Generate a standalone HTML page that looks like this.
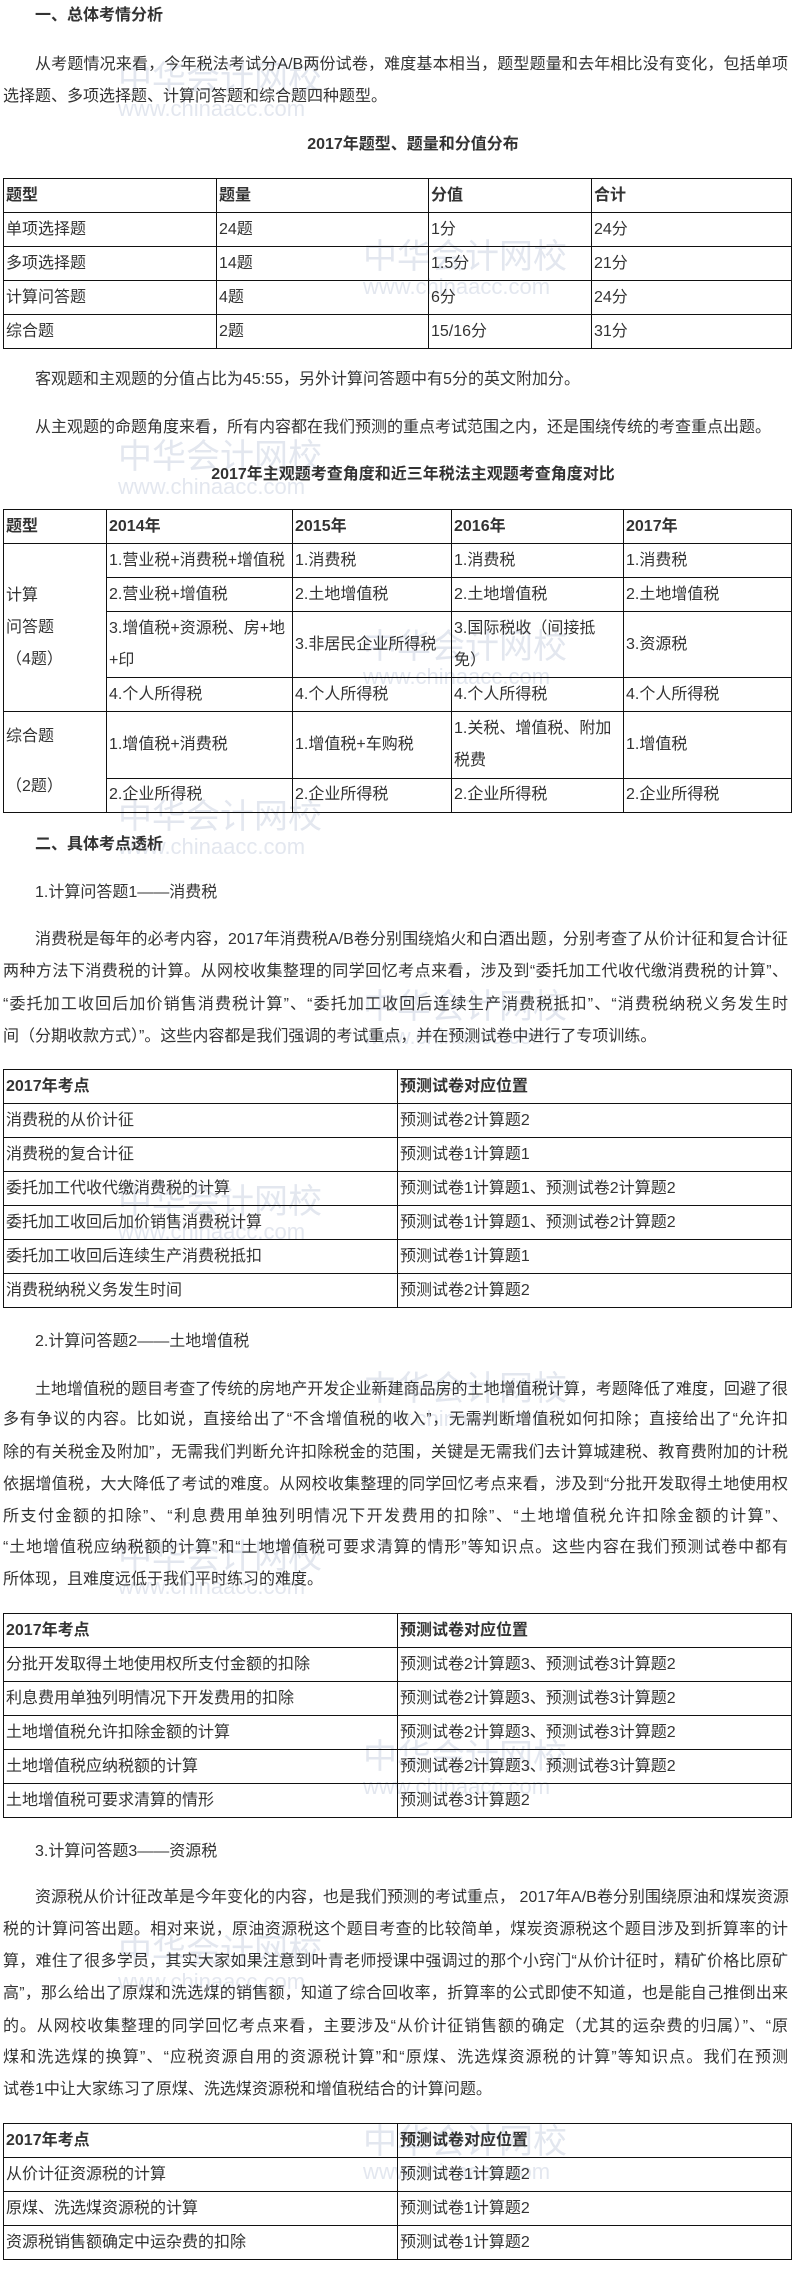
<!DOCTYPE html>
<html><head><meta charset="utf-8">
<style>
*{margin:0;padding:0;box-sizing:border-box}
body{width:794px;height:2273px;position:relative;background:#fff;color:#333;font-family:"Liberation Sans","Noto Sans CJK SC",sans-serif;font-size:16px;overflow:hidden}
.l{position:absolute;left:3px;width:785px;height:32px;line-height:32px;white-space:nowrap;text-align:justify;text-align-last:justify}
.l.e{text-align-last:left}
.i{padding-left:32px}
.h{position:absolute;left:35px;height:32px;line-height:32px;white-space:nowrap}
.b{font-weight:bold}
.t{position:absolute;left:3px;width:412px;text-align:center;font-weight:bold;height:32px;line-height:32px;padding-left:32px;width:788px}
table{position:absolute;left:3px;width:789px;border-collapse:collapse;table-layout:fixed}
td{border:1.5px solid #111;height:34px;padding:0 2px;line-height:32px;vertical-align:middle;white-space:nowrap;overflow:hidden}
tr.h0 td{font-weight:bold}
.w{position:absolute;color:#e3e7ef;font-size:34px;line-height:34px;white-space:nowrap;pointer-events:none}
.w small{display:block;font-size:22px;line-height:26px}
</style></head><body>

<div class="w" style="left:118px;top:62px">中华会计网校<small>www.chinaacc.com</small></div>
<div class="w" style="left:363px;top:240px">中华会计网校<small>www.chinaacc.com</small></div>
<div class="w" style="left:118px;top:440px">中华会计网校<small>www.chinaacc.com</small></div>
<div class="w" style="left:363px;top:630px">中华会计网校<small>www.chinaacc.com</small></div>
<div class="w" style="left:118px;top:800px">中华会计网校<small>www.chinaacc.com</small></div>
<div class="w" style="left:363px;top:990px">中华会计网校<small>www.chinaacc.com</small></div>
<div class="w" style="left:118px;top:1185px">中华会计网校<small>www.chinaacc.com</small></div>
<div class="w" style="left:363px;top:1372px">中华会计网校<small>www.chinaacc.com</small></div>
<div class="w" style="left:118px;top:1540px">中华会计网校<small>www.chinaacc.com</small></div>
<div class="w" style="left:363px;top:1740px">中华会计网校<small>www.chinaacc.com</small></div>
<div class="w" style="left:118px;top:1935px">中华会计网校<small>www.chinaacc.com</small></div>
<div class="w" style="left:363px;top:2125px">中华会计网校<small>www.chinaacc.com</small></div>

<div class="h b" style="top:0px">一、总体考情分析</div>
<div class="l i" style="top:49px">从考题情况来看，今年税法考试分A/B两份试卷，难度基本相当，题型题量和去年相比没有变化，包括单项</div>
<div class="l e" style="top:81px">选择题、多项选择题、计算问答题和综合题四种题型。</div>
<div class="t" style="top:129px">2017年题型、题量和分值分布</div>

<table style="top:178px">
<colgroup><col style="width:213px"><col style="width:212px"><col style="width:163px"><col></colgroup>
<tr class="h0"><td>题型</td><td>题量</td><td>分值</td><td>合计</td></tr>
<tr><td>单项选择题</td><td>24题</td><td>1分</td><td>24分</td></tr>
<tr><td>多项选择题</td><td>14题</td><td>1.5分</td><td>21分</td></tr>
<tr><td>计算问答题</td><td>4题</td><td>6分</td><td>24分</td></tr>
<tr><td>综合题</td><td>2题</td><td>15/16分</td><td>31分</td></tr>
</table>

<div class="l i e" style="top:364px">客观题和主观题的分值占比为45:55，另外计算问答题中有5分的英文附加分。</div>
<div class="l i e" style="top:412px">从主观题的命题角度来看，所有内容都在我们预测的重点考试范围之内，还是围绕传统的考查重点出题。</div>
<div class="t" style="top:459px">2017年主观题考查角度和近三年税法主观题考查角度对比</div>

<table style="top:509px">
<colgroup><col style="width:103px"><col style="width:186px"><col style="width:159px"><col style="width:172px"><col></colgroup>
<tr class="h0"><td>题型</td><td>2014年</td><td>2015年</td><td>2016年</td><td>2017年</td></tr>
<tr><td rowspan="4">计算<br>问答题<br>（4题）</td><td>1.营业税+消费税+增值税</td><td>1.消费税</td><td>1.消费税</td><td>1.消费税</td></tr>
<tr><td>2.营业税+增值税</td><td>2.土地增值税</td><td>2.土地增值税</td><td>2.土地增值税</td></tr>
<tr><td style="height:66px">3.增值税+资源税、房+地<br>+印</td><td>3.非居民企业所得税</td><td>3.国际税收（间接抵<br>免）</td><td>3.资源税</td></tr>
<tr><td>4.个人所得税</td><td>4.个人所得税</td><td>4.个人所得税</td><td>4.个人所得税</td></tr>
<tr><td rowspan="2" style="line-height:50px">综合题<br>（2题）</td><td style="height:66px">1.增值税+消费税</td><td>1.增值税+车购税</td><td>1.关税、增值税、附加<br>税费</td><td>1.增值税</td></tr>
<tr><td>2.企业所得税</td><td>2.企业所得税</td><td>2.企业所得税</td><td>2.企业所得税</td></tr>
</table>

<div class="h b" style="top:829px">二、具体考点透析</div>
<div class="h" style="top:877px">1.计算问答题1——消费税</div>
<div class="l i" style="top:924px">消费税是每年的必考内容，2017年消费税A/B卷分别围绕焰火和白酒出题，分别考查了从价计征和复合计征</div>
<div class="l" style="top:956px">两种方法下消费税的计算。从网校收集整理的同学回忆考点来看，涉及到“委托加工代收代缴消费税的计算”、</div>
<div class="l" style="top:989px">“委托加工收回后加价销售消费税计算”、“委托加工收回后连续生产消费税抵扣”、“消费税纳税义务发生时</div>
<div class="l e" style="top:1021px">间（分期收款方式）”。这些内容都是我们强调的考试重点，并在预测试卷中进行了专项训练。</div>

<table style="top:1069px">
<colgroup><col style="width:394px"><col></colgroup>
<tr class="h0"><td>2017年考点</td><td>预测试卷对应位置</td></tr>
<tr><td>消费税的从价计征</td><td>预测试卷2计算题2</td></tr>
<tr><td>消费税的复合计征</td><td>预测试卷1计算题1</td></tr>
<tr><td>委托加工代收代缴消费税的计算</td><td>预测试卷1计算题1、预测试卷2计算题2</td></tr>
<tr><td>委托加工收回后加价销售消费税计算</td><td>预测试卷1计算题1、预测试卷2计算题2</td></tr>
<tr><td>委托加工收回后连续生产消费税抵扣</td><td>预测试卷1计算题1</td></tr>
<tr><td>消费税纳税义务发生时间</td><td>预测试卷2计算题2</td></tr>
</table>

<div class="h" style="top:1326px">2.计算问答题2——土地增值税</div>
<div class="l i" style="top:1374px">土地增值税的题目考查了传统的房地产开发企业新建商品房的土地增值税计算，考题降低了难度，回避了很</div>
<div class="l" style="top:1404px">多有争议的内容。比如说，直接给出了“不含增值税的收入”，无需判断增值税如何扣除；直接给出了“允许扣</div>
<div class="l" style="top:1437px">除的有关税金及附加”，无需我们判断允许扣除税金的范围，关键是无需我们去计算城建税、教育费附加的计税</div>
<div class="l" style="top:1469px">依据增值税，大大降低了考试的难度。从网校收集整理的同学回忆考点来看，涉及到“分批开发取得土地使用权</div>
<div class="l" style="top:1501px">所支付金额的扣除”、“利息费用单独列明情况下开发费用的扣除”、“土地增值税允许扣除金额的计算”、</div>
<div class="l" style="top:1532px">“土地增值税应纳税额的计算”和“土地增值税可要求清算的情形”等知识点。这些内容在我们预测试卷中都有</div>
<div class="l e" style="top:1564px">所体现，且难度远低于我们平时练习的难度。</div>

<table style="top:1613px">
<colgroup><col style="width:394px"><col></colgroup>
<tr class="h0"><td>2017年考点</td><td>预测试卷对应位置</td></tr>
<tr><td>分批开发取得土地使用权所支付金额的扣除</td><td>预测试卷2计算题3、预测试卷3计算题2</td></tr>
<tr><td>利息费用单独列明情况下开发费用的扣除</td><td>预测试卷2计算题3、预测试卷3计算题2</td></tr>
<tr><td>土地增值税允许扣除金额的计算</td><td>预测试卷2计算题3、预测试卷3计算题2</td></tr>
<tr><td>土地增值税应纳税额的计算</td><td>预测试卷2计算题3、预测试卷3计算题2</td></tr>
<tr><td>土地增值税可要求清算的情形</td><td>预测试卷3计算题2</td></tr>
</table>

<div class="h" style="top:1836px">3.计算问答题3——资源税</div>
<div class="l i" style="top:1882px">资源税从价计征改革是今年变化的内容，也是我们预测的考试重点， 2017年A/B卷分别围绕原油和煤炭资源</div>
<div class="l" style="top:1914px">税的计算问答出题。相对来说，原油资源税这个题目考查的比较简单，煤炭资源税这个题目涉及到折算率的计</div>
<div class="l" style="top:1946px">算，难住了很多学员，其实大家如果注意到叶青老师授课中强调过的那个小窍门“从价计征时，精矿价格比原矿</div>
<div class="l" style="top:1978px">高”，那么给出了原煤和洗选煤的销售额，知道了综合回收率，折算率的公式即使不知道，也是能自己推倒出来</div>
<div class="l" style="top:2011px">的。从网校收集整理的同学回忆考点来看，主要涉及“从价计征销售额的确定（尤其的运杂费的归属）”、“原</div>
<div class="l" style="top:2042px">煤和洗选煤的换算”、“应税资源自用的资源税计算”和“原煤、洗选煤资源税的计算”等知识点。我们在预测</div>
<div class="l e" style="top:2074px">试卷1中让大家练习了原煤、洗选煤资源税和增值税结合的计算问题。</div>

<table style="top:2123px">
<colgroup><col style="width:394px"><col></colgroup>
<tr class="h0"><td>2017年考点</td><td>预测试卷对应位置</td></tr>
<tr><td>从价计征资源税的计算</td><td>预测试卷1计算题2</td></tr>
<tr><td>原煤、洗选煤资源税的计算</td><td>预测试卷1计算题2</td></tr>
<tr><td>资源税销售额确定中运杂费的扣除</td><td>预测试卷1计算题2</td></tr>
</table>

</body></html>
